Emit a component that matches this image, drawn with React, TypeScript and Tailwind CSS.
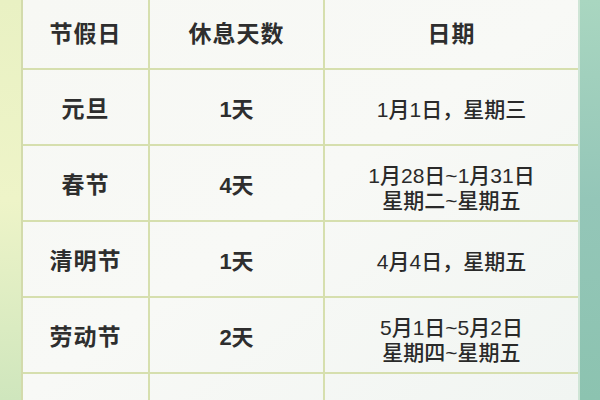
const rows = [
  { name: "元旦", days: "1天", date: ["1月1日，星期三"] },
  { name: "春节", days: "4天", date: ["1月28日~1月31日", "星期二~星期五"] },
  { name: "清明节", days: "1天", date: ["4月4日，星期五"] },
  { name: "劳动节", days: "2天", date: ["5月1日~5月2日", "星期四~星期五"] },
  { name: "", days: "", date: [""] },
];

const font = { fontFamily: '"Liberation Sans", "Noto Sans CJK SC", sans-serif' };

export default function App() {
  return (
    <div
      className="w-[600px] h-[400px] overflow-hidden flex bg-gradient-to-b from-[#e9f1c3] via-[#eef4c8] to-[#cfe6bd] text-[#2e2e2e]"
      style={font}
    >
      <div className="w-[21px] shrink-0" />
      <div className="w-[557px] shrink-0 flex flex-col border-l-2 border-[#d3dbac] bg-gradient-to-br from-[#f7f8f4] via-[#f8f9f6] to-[#f1f5f2]">
        <div className="grid grid-cols-[127px_175px_253px] h-[70px] shrink-0 border-b-2 border-[#d6dfae] text-[23px] font-bold tracking-[1px]">
          <div className="flex items-center justify-center border-r-2 border-[#d6dfae]">节假日</div>
          <div className="flex items-center justify-center border-r-2 border-[#d6dfae]">休息天数</div>
          <div className="flex items-center justify-center">日期</div>
        </div>
        {rows.map((r, i) => (
          <div
            key={i}
            className="grid grid-cols-[127px_175px_253px] h-[76px] shrink-0 border-b-2 border-[#d6dfae]"
          >
            <div className="flex items-center justify-center pt-1 border-r-2 border-[#d6dfae] text-[23px] font-bold tracking-[1px]">
              {r.name}
            </div>
            <div className="flex items-center justify-center pt-1 border-r-2 border-[#d6dfae] text-[22px] font-bold">
              {r.days}
            </div>
            <div
              className={
                r.date.length > 1
                  ? "flex flex-col items-center justify-center pt-[9px] text-[21px] leading-[25px] font-medium text-[#2a2a2a]"
                  : "flex flex-col items-center justify-center pt-1 text-[21px] leading-[25px] font-medium text-[#2a2a2a]"
              }
            >
              {r.date.map((d, j) => (
                <div key={j}>{d}</div>
              ))}
            </div>
          </div>
        ))}
      </div>
      <div className="flex-1 border-l-2 border-[#cfe5d6] bg-gradient-to-b from-[#a9d6c0] via-[#94c6b8] to-[#8cc3b0]" />
    </div>
  );
}
